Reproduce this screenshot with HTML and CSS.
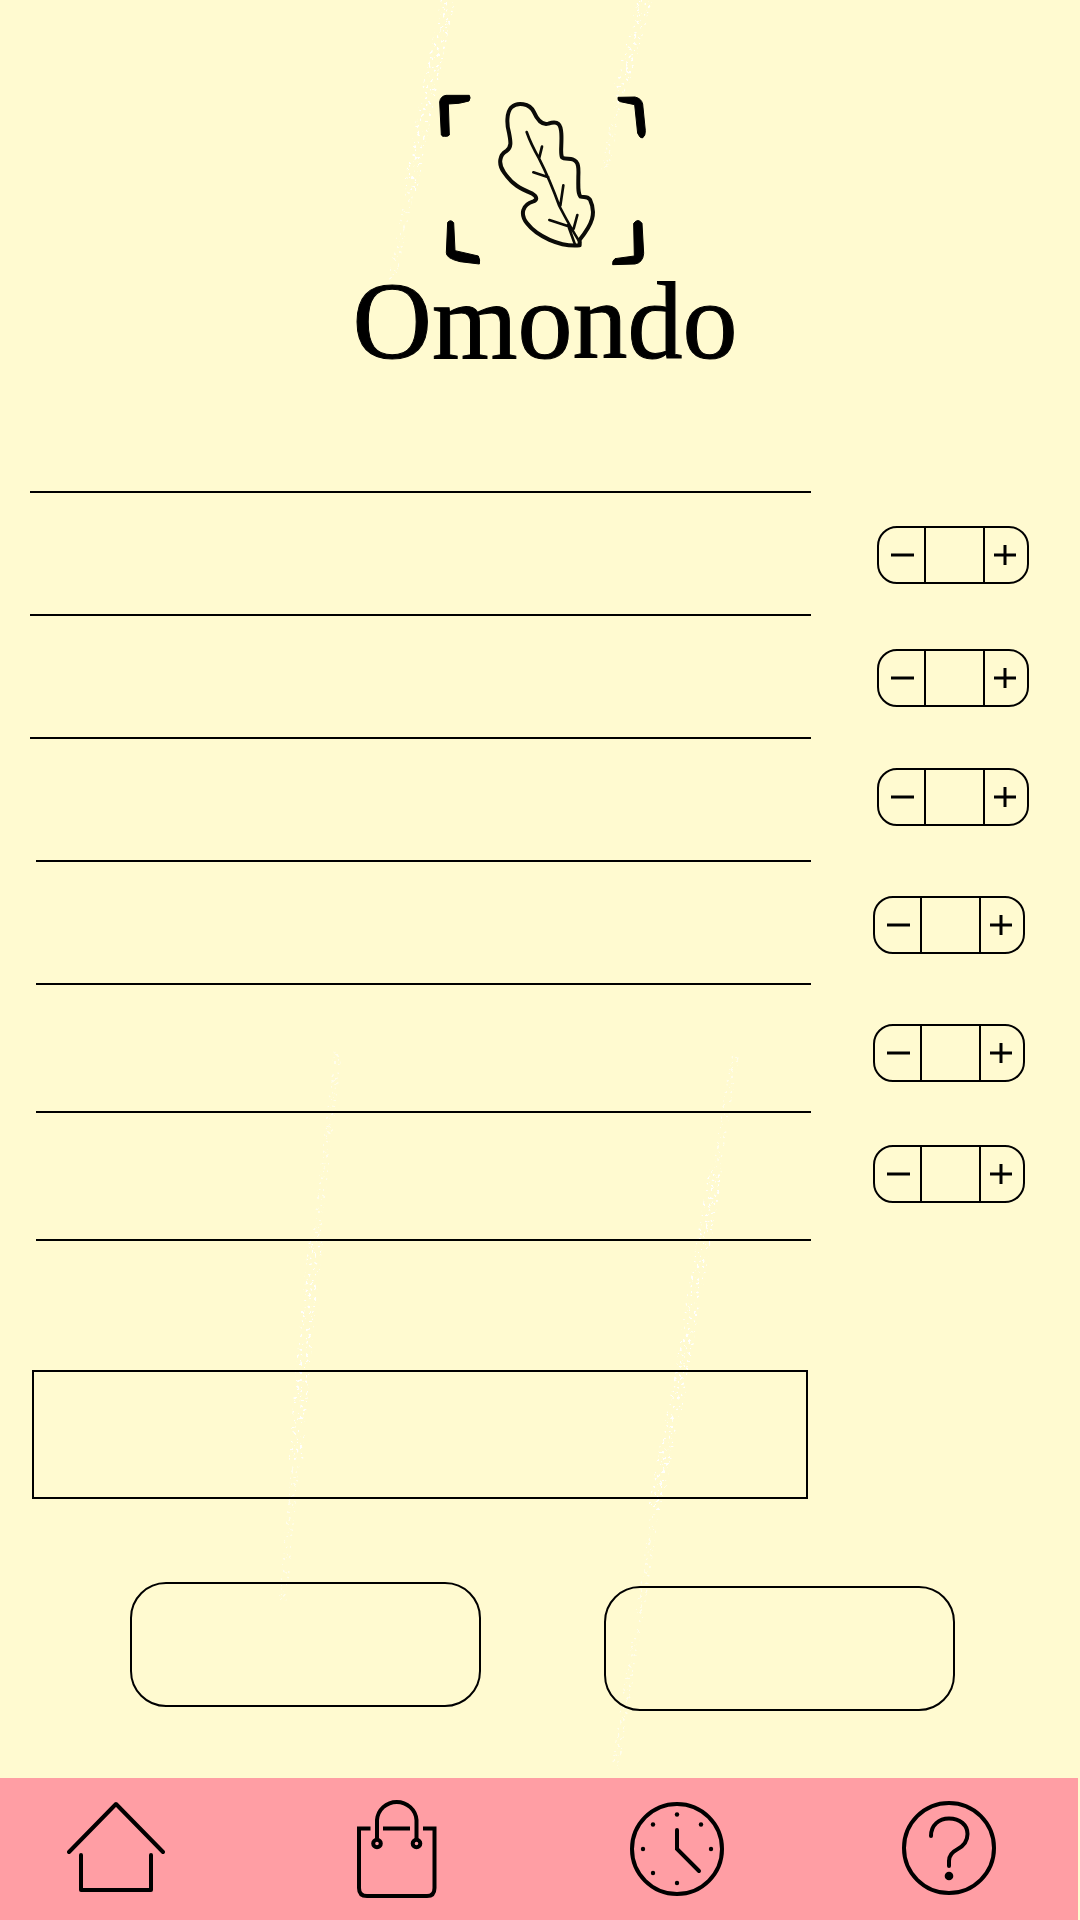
FILE: index.html
```html
<!DOCTYPE html>
<html lang="en">
<head>
<meta charset="utf-8">
<meta name="viewport" content="width=device-width, initial-scale=1">
<title>Omondo</title>
<link rel="stylesheet" href="styles.css">
</head>
<body>
<!-- Paper texture behind the page -->
<svg class="texture" viewBox="0 0 1080 1920" preserveAspectRatio="none" aria-hidden="true">
  <filter id="speckle" filterUnits="userSpaceOnUse" x="0" y="0" width="1080" height="1920">
    <feTurbulence type="fractalNoise" baseFrequency="0.35" numOctaves="2" seed="4"/>
    <feColorMatrix values="0 0 0 0 1  0 0 0 0 1  0 0 0 0 1  14 0 0 0 -8.600"/>
    <feComposite in2="SourceAlpha" operator="in"/>
  </filter>
  <g filter="url(#speckle)">
    <path class="streak" d="M645 0 L634 40 L620 90 M448 0 L425 110 L410 190"/>
    <path class="streak" d="M316 1240 L308 1310 L302 1380 L296 1460 M716 1170 L704 1240 L690 1320 L681 1380 L666 1450 L655 1510"/>
    <path class="streak faint" d="M338 1050 L330 1120 L316 1240 M296 1460 L290 1520 L283 1600 M735 1055 L716 1170 M655 1510 L645 1580 L632 1660 L615 1770 M620 90 L605 170 M410 190 L392 280"/>
  </g>
</svg>
<header class="brand">
  <svg class="brand-mark" viewBox="0 0 1230 558" aria-hidden="true">
    <g class="corners">
      <path d="M304 165 Q306 170 314 169 Q325 170 328 165 L325 72 Q360 72 387 63 Q393 53 388 46 L318 46 Q301 49 299 66 Z"/>
      <path d="M834 52 Q832 63 841 65 L884 74 L893 160 Q900 175 907 174 Q917 168 916 152 L908 72 Q904 55 885 51 Z"/>
      <path d="M323 427 Q332 417 341 428 L345 512 L415 528 Q421 540 418 552 L360 545 Q318 535 319 518 Z"/>
      <path d="M881 430 Q894 413 906 430 L911 520 Q909 548 885 552 L818 554 Q816 543 825 536 L883 528 Z"/>
    </g>
    <g class="leaf">
      <path class="leaf-edge" d="M719 496 C660 502 590 468 561 430 C540 403 546 374 580 364 C592 360 592 350 577 341 C540 325 518 315 492 277 C472 249 481 224 498 214 C516 202 512 184 507 158 C500 134 499 98 514 82 C532 65 569 70 581 95 C592 120 606 136 625 131 C656 121 662 134 664 160 C666 196 660 220 666 232 C672 238 688 235 698 238 C717 244 716 266 715 290 C715 318 713 342 722 350 C732 353 741 347 750 359 C769 399 758 431 719 479 Z"/>
      <path class="leaf-vein" d="M560 156 Q573 193 597 235 Q630 300 658 378 Q690 440 720 488 M684 435 L705 494 M606 200 L598 232 M580 277 L625 292 M670 316 L661 377 M628 420 L690 440 M712 405 L701 446"/>
    </g>
  </svg>
  <h1 class="brand-name">Omondo</h1>
</header>

<main class="page">
  <section class="order" aria-label="Order">
    <ul class="lines">
      <li class="line"></li>
      <li class="line"></li>
      <li class="line"></li>
      <li class="line line-inset"></li>
      <li class="line line-inset"></li>
      <li class="line line-inset"></li>
    </ul>
    <div class="steppers">
      <div class="stepper">
        <button type="button" aria-label="Remove one of item 1"><svg class="sign" viewBox="0 0 24 24"><path d="M1 12H24"/></svg></button>
        <input type="text" inputmode="numeric" aria-label="Quantity of item 1">
        <button type="button" aria-label="Add one of item 1"><svg class="sign" viewBox="0 0 24 24"><path d="M0 12H22M11 2V22"/></svg></button>
      </div>
      <div class="stepper">
        <button type="button" aria-label="Remove one of item 2"><svg class="sign" viewBox="0 0 24 24"><path d="M1 12H24"/></svg></button>
        <input type="text" inputmode="numeric" aria-label="Quantity of item 2">
        <button type="button" aria-label="Add one of item 2"><svg class="sign" viewBox="0 0 24 24"><path d="M0 12H22M11 2V22"/></svg></button>
      </div>
      <div class="stepper">
        <button type="button" aria-label="Remove one of item 3"><svg class="sign" viewBox="0 0 24 24"><path d="M1 12H24"/></svg></button>
        <input type="text" inputmode="numeric" aria-label="Quantity of item 3">
        <button type="button" aria-label="Add one of item 3"><svg class="sign" viewBox="0 0 24 24"><path d="M0 12H22M11 2V22"/></svg></button>
      </div>
      <div class="stepper stepper-inset">
        <button type="button" aria-label="Remove one of item 4"><svg class="sign" viewBox="0 0 24 24"><path d="M1 12H24"/></svg></button>
        <input type="text" inputmode="numeric" aria-label="Quantity of item 4">
        <button type="button" aria-label="Add one of item 4"><svg class="sign" viewBox="0 0 24 24"><path d="M0 12H22M11 2V22"/></svg></button>
      </div>
      <div class="stepper stepper-inset">
        <button type="button" aria-label="Remove one of item 5"><svg class="sign" viewBox="0 0 24 24"><path d="M1 12H24"/></svg></button>
        <input type="text" inputmode="numeric" aria-label="Quantity of item 5">
        <button type="button" aria-label="Add one of item 5"><svg class="sign" viewBox="0 0 24 24"><path d="M0 12H22M11 2V22"/></svg></button>
      </div>
      <div class="stepper stepper-inset">
        <button type="button" aria-label="Remove one of item 6"><svg class="sign" viewBox="0 0 24 24"><path d="M1 12H24"/></svg></button>
        <input type="text" inputmode="numeric" aria-label="Quantity of item 6">
        <button type="button" aria-label="Add one of item 6"><svg class="sign" viewBox="0 0 24 24"><path d="M0 12H22M11 2V22"/></svg></button>
      </div>
    </div>
  </section>

  <div class="summary">
    <input class="summary-box" type="text" aria-label="Order summary">
  </div>

  <div class="actions">
    <button class="action" type="button" aria-label="Cancel"></button>
    <button class="action action-low" type="button" aria-label="Confirm"></button>
  </div>
</main>

<nav class="tabs" aria-label="Main">
  <a class="tab" href="#home" aria-label="Home">
    <svg class="tab-icon" viewBox="0 0 98 106"><g class="round"><path d="M2 56 L49 8 L96 56"/><path d="M14 59 V94 H84 V59"/></g></svg>
  </a>
  <a class="tab" href="#bag" aria-label="Bag">
    <svg class="tab-icon" viewBox="0 0 98 106"><g class="bold"><path d="M22.500 32.500 H11 V92 Q11 100 19 100 H79 Q86.500 100 86.500 92 V32.500 H75 M35 32.500 H62"/><path d="M29 43 V24 A19.800 19.500 0 0 1 68.500 24 V43"/><circle cx="29" cy="47.500" r="3.800"/><circle cx="68.500" cy="47.500" r="3.800"/></g></svg>
  </a>
  <a class="tab" href="#history" aria-label="History">
    <svg class="tab-icon" viewBox="0 0 98 106"><g class="bold"><circle cx="49" cy="53" r="45"/><path d="M49 34 V53 L71 75"/></g><g class="solid"><circle cx="49" cy="18.500" r="2.200"/><circle cx="49" cy="87" r="2.200"/><circle cx="15" cy="53" r="2.200"/><circle cx="83" cy="53" r="2.200"/><circle cx="25" cy="28.500" r="2.200"/><circle cx="73" cy="28.500" r="2.200"/><circle cx="25" cy="77" r="2.200"/></g></svg>
  </a>
  <a class="tab" href="#help" aria-label="Help">
    <svg class="tab-icon" viewBox="0 0 98 106"><g class="bold"><circle cx="49" cy="52" r="45"/><path d="M31 40 C31 29 39 22.500 49 22.500 C60 22.500 67.500 29 67.500 38 C67.500 46 62 51 57 53.500 C51 56.500 49 60 49 65 V70"/></g><g class="solid"><circle cx="49" cy="80" r="4.300"/></g></svg>
  </a>
</nav>
</body>
</html>
```
FILE: styles.css
```css
* {
  box-sizing: border-box;
}

body {
  margin: 0;
  min-height: 100vh;
  position: relative;
  display: flex;
  flex-direction: column;
  background: #fffad0;
  color: #000;
  font-family: "Liberation Serif", serif;
}

button,
input {
  margin: 0;
  padding: 0;
  border: 0;
  border-radius: 0;
  background: transparent;
  color: inherit;
  font: inherit;
}

.texture {
  position: absolute;
  inset: 0;
  width: 100%;
  height: 100%;
  z-index: -1;
}

.streak {
  fill: none;
  stroke: #fff;
  stroke-width: 14;
  stroke-linejoin: round;
}

.faint {
  stroke-width: 8;
  opacity: 0.6;
}

/* Brand */

.brand {
  display: flex;
  flex-direction: column;
  align-items: center;
  padding: 80px 0 0 10px;
}

.brand-mark {
  width: 410px;
  height: 186px;
}

.corners {
  stroke: #000;
  stroke-width: 3;
  stroke-linejoin: round;
}

.leaf {
  fill: none;
  stroke: #0b0b08;
  stroke-linecap: round;
  stroke-linejoin: round;
}

.leaf-edge {
  stroke-width: 12;
}

.leaf-vein {
  stroke-width: 8;
}

.brand-name {
  margin: 0;
  font-size: 110px;
  line-height: 110px;
  font-weight: 400;
  -webkit-text-stroke: 1px #000;
}

/* Order list */

.page {
  flex: 1;
  padding-top: 115px;
}

.order {
  display: grid;
  grid-template-columns: 1fr 152px;
  column-gap: 66px;
  padding: 0 51px 0 30px;
}

.lines {
  display: grid;
  grid-template-rows: repeat(4, 123px) 128px 130px;
  margin: 0;
  padding: 0;
  list-style: none;
}

.line {
  border-top: 2px solid #000;
}

.line-inset {
  margin-left: 6px;
}

.line:last-child {
  border-bottom: 2px solid #000;
}

.steppers {
  display: grid;
  grid-template-rows: 123px 119px 128px 128px 121px 58px;
  align-content: start;
  padding-top: 35px;
}

.stepper {
  display: grid;
  grid-template-columns: 45px 61px 1fr;
  width: 152px;
  height: 58px;
  border: 2px solid #000;
  border-radius: 20px;
}

.stepper-inset {
  margin-left: -4px;
}

.stepper button {
  display: flex;
  align-items: center;
  justify-content: center;
}

.stepper input {
  width: 100%;
  height: 100%;
  border: solid #000;
  border-width: 0 2px;
  text-align: center;
  font-size: 24px;
}

.sign {
  width: 24px;
  height: 24px;
  fill: none;
  stroke: #000;
  stroke-width: 3;
}

/* Summary and actions */

.summary {
  display: flex;
  padding: 129px 272px 0 32px;
}

.summary-box {
  flex: 1;
  height: 129px;
  padding: 0 24px;
  border: 2px solid #000;
  font-size: 32px;
}

.actions {
  display: grid;
  grid-template-columns: 1fr 1fr;
  grid-template-rows: 129px;
  align-items: start;
  gap: 123px;
  padding: 83px 125px 60px 130px;
}

.action {
  height: 125px;
  border: 2px solid #000;
  border-radius: 36px;
}

.action-low {
  align-self: end;
}

/* Bottom tabs */

.tabs {
  display: grid;
  grid-template-columns: 281fr 280fr 272fr 98px;
  align-items: center;
  height: 142px;
  margin-right: 2px;
  padding: 0 80px 0 67px;
  background: #ff9ea4;
}

.tab {
  display: flex;
  width: 98px;
  color: inherit;
}

.tab-icon {
  width: 98px;
  height: 106px;
  fill: none;
  stroke: #000;
  stroke-linecap: round;
}

.round {
  stroke-width: 4;
  stroke-linejoin: round;
}

.bold {
  stroke-width: 4;
  stroke-linecap: butt;
}

.bold path:last-child {
  stroke-linecap: round;
}

.solid {
  fill: #000;
  stroke: none;
}
```
